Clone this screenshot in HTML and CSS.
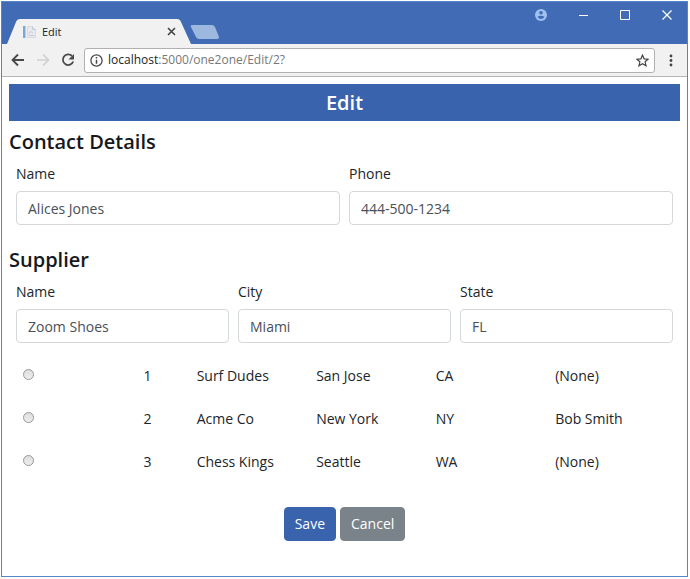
FILE: index.html
```html
<!DOCTYPE html>
<html lang="en">
<head>
<meta charset="utf-8">
<meta name="viewport" content="width=device-width, initial-scale=1">
<title>Edit</title>
<link rel="stylesheet" href="styles.css">
</head>
<body>
<div class="window">
  <header class="titlebar">
    <div class="tab">
      <svg class="tab-shape" viewBox="0 0 186 25" preserveAspectRatio="none" aria-hidden="true"><path d="M0 25 L9 3 Q10 0 13 0 H170 Q173 0 174 3 L184 25 Z"/></svg>
      <svg class="favicon" width="14" height="14" viewBox="0 0 14 14" aria-hidden="true"><path fill="#78a8e0" d="M0 1h2.500v12H0z"/><path fill="#e8eaee" stroke="#d6dae0" d="M4.500 1.500h5l3 3v8h-8z"/><path fill="none" stroke="#c4ccd8" d="M9.500 1.500v3h3M6 9c1-3 2-3 4-1M6 10.500h5"/></svg>
      <span class="tab-title">Edit</span>
      <button class="icon-button tab-close" type="button" aria-label="Close tab"><svg width="9" height="9" viewBox="0 0 9 9"><path d="M1 1l7 7M8 1L1 8" fill="none" stroke="#444" stroke-width="1.600"/></svg></button>
    </div>
    <button class="icon-button new-tab" type="button" aria-label="New tab"><svg width="30" height="14" viewBox="0 0 30 14"><path d="M2 0h20q2 0 3 2l4 10q0 2-2 2H9q-2 0-3-2L1 2q-1-2 1-2z" fill="#9db8df"/></svg></button>
    <div class="window-controls">
      <button class="icon-button" type="button" aria-label="Profile"><svg width="12" height="12" viewBox="0 0 12 12"><circle cx="6" cy="6" r="6" fill="#9fc0f0"/><circle cx="6" cy="3.800" r="1.800" fill="#416cb5"/><path d="M2.400 7.800q3.600-2.200 7.200 0q-3.600 4.400-7.200 0z" fill="#416cb5"/></svg></button>
      <button class="icon-button" type="button" aria-label="Minimize"><svg width="9" height="10" viewBox="0 0 9 10"><path d="M0 5.500h9" stroke="#fff"/></svg></button>
      <button class="icon-button" type="button" aria-label="Maximize"><svg width="10" height="10" viewBox="0 0 10 10"><path d="M.5.500h9v9h-9z" fill="none" stroke="#fff"/></svg></button>
      <button class="icon-button" type="button" aria-label="Close"><svg width="10" height="10" viewBox="0 0 10 10"><path d="M.5.500l9 9M9.500.500l-9 9" stroke="#fff" stroke-width="1.200"/></svg></button>
    </div>
  </header>
  <nav class="toolbar" aria-label="Browser">
    <button class="icon-button" type="button" aria-label="Back"><svg width="14" height="14" viewBox="0 0 14 14"><path d="M13 7H2M7 1.500L1.500 7L7 12.500" fill="none" stroke="#484848" stroke-width="1.800"/></svg></button>
    <button class="icon-button" type="button" aria-label="Forward"><svg width="14" height="14" viewBox="0 0 14 14"><path d="M1 7h11M7 1.500L12.500 7L7 12.500" fill="none" stroke="#cfcfcf" stroke-width="1.600"/></svg></button>
    <button class="icon-button" type="button" aria-label="Reload"><svg width="14" height="14" viewBox="0 0 14 14"><path d="M11 3A5.300 5.300 0 1 0 12.200 8.500" fill="none" stroke="#484848" stroke-width="1.800"/><path d="M13 1v5.500H7.500z" fill="#484848"/></svg></button>
    <div class="address">
      <svg width="13" height="13" viewBox="0 0 13 13" aria-hidden="true"><circle cx="6.500" cy="6.500" r="5.600" fill="none" stroke="#484848" stroke-width="1.300"/><path d="M6.500 5.700v4M6.500 3v1.500" stroke="#484848" stroke-width="1.500"/></svg>
      <span class="url">localhost<span class="path">:5000/one2one/Edit/2?</span></span>
      <button class="icon-button" type="button" aria-label="Bookmark"><svg width="13" height="13" viewBox="0 0 14 14"><path d="M7 1.200L8.700 5.200L13 5.600L9.800 8.400L10.800 12.700L7 10.400L3.200 12.700L4.200 8.400L1 5.600L5.300 5.200Z" fill="none" stroke="#444" stroke-width="1.300"/></svg></button>
    </div>
    <button class="icon-button" type="button" aria-label="Menu"><svg width="4" height="13" viewBox="0 0 4 13"><g fill="#444"><circle cx="2" cy="2" r="1.400"/><circle cx="2" cy="6.500" r="1.400"/><circle cx="2" cy="11" r="1.400"/></g></svg></button>
  </nav>
  <main class="page">
    <h1 class="banner">Edit</h1>
    <form>
      <h2 class="section-title">Contact Details</h2>
      <div class="fields">
        <div class="field"><label for="contact-name">Name</label><input id="contact-name" type="text" value="Alices Jones"></div>
        <div class="field"><label for="contact-phone">Phone</label><input id="contact-phone" type="text" value="444-500-1234"></div>
      </div>
      <h2 class="section-title">Supplier</h2>
      <div class="fields">
        <div class="field"><label for="supplier-name">Name</label><input id="supplier-name" type="text" value="Zoom Shoes"></div>
        <div class="field"><label for="supplier-city">City</label><input id="supplier-city" type="text" value="Miami"></div>
        <div class="field"><label for="supplier-state">State</label><input id="supplier-state" type="text" value="FL"></div>
      </div>
      <table class="suppliers">
        <colgroup><col class="wide"><col class="narrow"><col class="wide"><col class="wide"><col class="wide"><col></colgroup>
        <tbody>
          <tr><td><input type="radio" name="supplier" aria-label="Surf Dudes"></td><td>1</td><td>Surf Dudes</td><td>San Jose</td><td>CA</td><td>(None)</td></tr>
          <tr><td><input type="radio" name="supplier" aria-label="Acme Co"></td><td>2</td><td>Acme Co</td><td>New York</td><td>NY</td><td>Bob Smith</td></tr>
          <tr><td><input type="radio" name="supplier" aria-label="Chess Kings"></td><td>3</td><td>Chess Kings</td><td>Seattle</td><td>WA</td><td>(None)</td></tr>
        </tbody>
      </table>
      <div class="actions">
        <button class="btn btn-primary" type="submit">Save</button>
        <a class="btn btn-secondary" href="#">Cancel</a>
      </div>
    </form>
  </main>
</div>
</body>
</html>
```

FILE: styles.css
```css
* { box-sizing: border-box; }

body {
  margin: 0;
  padding: 1px 2px 2px 1px;
  background: #fff;
  color: #212529;
  font: 14px/22px "Open Sans", "Noto Sans", sans-serif;
}

.window {
  display: flex;
  flex-direction: column;
  min-height: calc(100vh - 3px);
  border: 1px solid #5585c8;
}

.icon-button {
  display: flex;
  padding: 0;
  border: 0;
  background: none;
}

.titlebar {
  display: flex;
  align-items: flex-end;
  height: 42px;
  padding-left: 5px;
  background: #416cb5;
}

.tab {
  position: relative;
  display: flex;
  align-items: center;
  gap: 5px;
  width: 186px;
  height: 25px;
  padding: 0 17px 0 16px;
  font-size: 11px;
}

.tab-shape {
  position: absolute;
  inset: 0;
  width: 100%;
  height: 100%;
  fill: #f1f1f1;
}

.favicon, .tab-title, .tab-close { position: relative; }

.tab-title { flex: 1; }

.new-tab {
  margin-bottom: 5px;
  margin-left: -3px;
}

.window-controls {
  display: flex;
  align-items: center;
  align-self: flex-start;
  gap: 32px;
  margin-left: auto;
  padding: 7px 15px 0 0;
}

.toolbar {
  display: flex;
  align-items: center;
  gap: 11px;
  height: 33px;
  padding: 0 14px 0 9px;
  border-bottom: 1px solid #b5b5b5;
  background: #f1f1f1;
}

.address {
  display: flex;
  flex: 1;
  align-items: center;
  gap: 5px;
  height: 25px;
  padding: 0 5px;
  margin: 0 3px 0 -2px;
  border: 1px solid #b0b0b0;
  border-radius: 3px;
  background: #fff;
  font-size: 12px;
}

.url { flex: 1; }

.path { color: #777; }

.page { padding: 7px; }

.banner {
  margin: 0;
  padding: 4px;
  background: #3963ad;
  color: #fff;
  font-size: 20px;
  font-weight: 600;
  line-height: 29px;
  text-align: center;
}

.section-title {
  margin: 7px 0;
  color: #16191c;
  font-size: 20px;
  font-weight: 600;
  line-height: 28px;
}

.fields {
  display: flex;
  gap: 9px;
  margin-bottom: 21px;
  padding: 0 7px;
}

.field {
  flex: 1;
  min-width: 0;
}

.field label {
  display: block;
  margin-bottom: 6px;
}

.field input {
  display: block;
  width: 100%;
  height: 34px;
  padding: 0 11px;
  border: 1px solid #d5d8db;
  border-radius: 4px;
  color: #495057;
  font: inherit;
}

.suppliers {
  width: calc(100% - 7px);
  margin: -10px 0 0 7px;
  border-collapse: collapse;
  table-layout: fixed;
}

.suppliers td {
  height: 43px;
  padding: 0 8px;
}

.suppliers td:first-child { padding: 0 7px 2px; }

.wide { width: 18%; }

.narrow { width: 8%; }

.suppliers input {
  display: block;
  appearance: none;
  width: 11px;
  height: 11px;
  margin: 0;
  border: 1px solid #999;
  border-radius: 50%;
  background: linear-gradient(#ddd, #eee);
}

.suppliers input:checked { background: #3963ad; }

.actions {
  display: flex;
  justify-content: center;
  gap: 4px;
  margin-top: 24px;
}

.btn {
  padding: 5px 10px;
  border: 1px solid;
  border-radius: 4px;
  color: #fff;
  font: inherit;
  text-decoration: none;
}

.btn-primary {
  border-color: #3963ad;
  background: #3963ad;
}

.btn-secondary {
  border-color: #7b838a;
  background: #7b838a;
}
```
